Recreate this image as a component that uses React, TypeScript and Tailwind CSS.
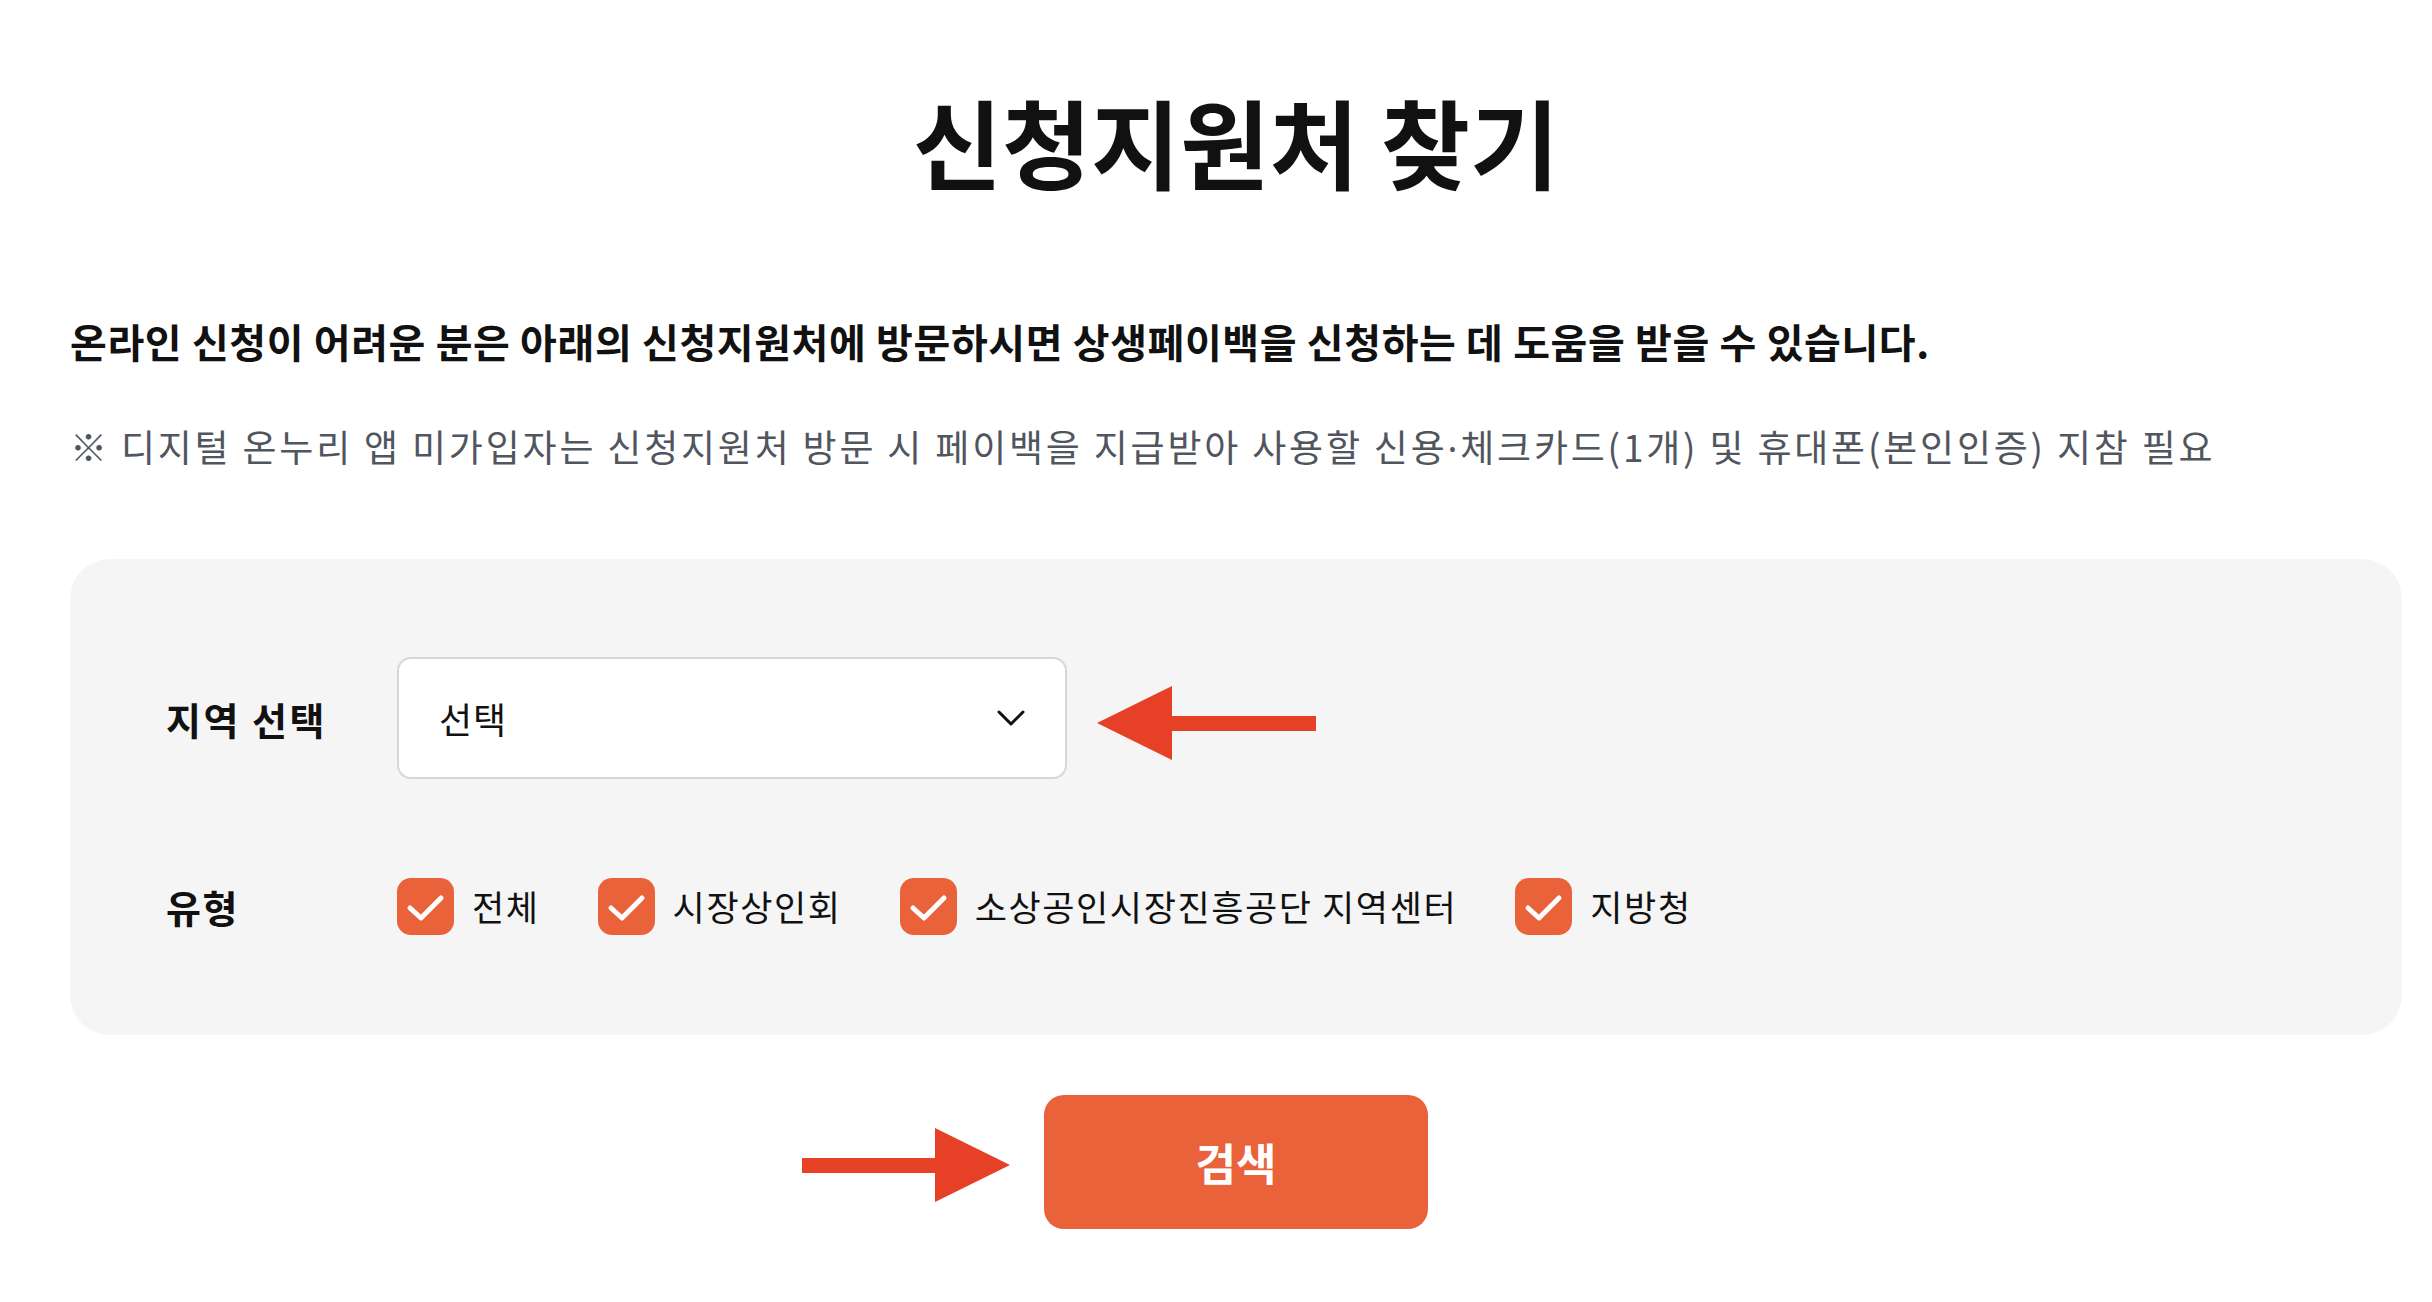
import { useState } from 'react';

const font = { fontFamily: '"Noto Sans CJK KR", "Noto Sans", sans-serif' };

const types = ['전체', '시장상인회', '소상공인시장진흥공단 지역센터', '지방청'];

function CheckBox({ label }: { label: string }) {
  return (
    <label className="flex items-center gap-[18px]">
      <span className="flex h-[57px] w-[57px] items-center justify-center rounded-[14px] bg-[#e9623a]">
        <svg width="57" height="57" viewBox="0 0 57 57" fill="none">
          <polyline points="13,30 24,40 44,20" stroke="white" strokeWidth="5" strokeLinecap="round" strokeLinejoin="round" />
        </svg>
      </span>
      <span className="text-[35px] tracking-[1.6px] text-[#111]">{label}</span>
    </label>
  );
}

export default function App() {
  const [region] = useState('선택');

  return (
    <div className="h-[1302px] w-full bg-white pl-[70px] pr-[30px] text-[#111]" style={font}>
      {/* Title */}
      <h1 className="pt-[91px] text-center text-[97px] font-bold leading-none">신청지원처 찾기</h1>

      {/* Description */}
      <p className="mt-[133px] text-[40px] font-bold leading-none tracking-[0.6px]">
        온라인 신청이 어려운 분은 아래의 신청지원처에 방문하시면 상생페이백을 신청하는 데 도움을 받을 수 있습니다.
      </p>
      <p className="mt-[67px] text-[37px] leading-none tracking-[2.8px] text-[#51565e]">
        ※ 디지털 온누리 앱 미가입자는 신청지원처 방문 시 페이백을 지급받아 사용할 신용
        <span style={{ fontFamily: '"Noto Sans", sans-serif' }}>·</span>
        체크카드(1개) 및 휴대폰(본인인증) 지참 필요
      </p>

      {/* Search panel */}
      <div className="mt-[93px] rounded-[40px] bg-[#f5f5f5] px-[96px] pb-[100px] pt-[98px]">
        <div className="flex items-center">
          <span className="w-[231px] text-[38px] font-bold tracking-[2.5px]">지역 선택</span>
          <div className="flex h-[122px] w-[670px] items-center justify-between rounded-[14px] border-2 border-[#d4d6da] bg-white px-[40px]">
            <span className="text-[36px] tracking-[1px]">{region}</span>
            <svg width="28" height="16" viewBox="0 0 28 16" fill="none">
              <polyline points="2,2 14,14 26,2" stroke="#111" strokeWidth="3" strokeLinecap="round" strokeLinejoin="round" />
            </svg>
          </div>
          <svg className="ml-[30px] mt-[10px]" width="219" height="75" viewBox="0 0 219 75">
            <polygon points="0,37 75,0 75,74" fill="#e64027" />
            <rect x="74" y="30" width="145" height="15" fill="#e64027" />
          </svg>
        </div>

        <div className="mt-[99px] flex items-center">
          <span className="w-[231px] text-[38px] font-bold tracking-[1.5px]">유형</span>
          <div className="flex items-center gap-[58px]">
            {types.map((t) => (
              <CheckBox key={t} label={t} />
            ))}
          </div>
        </div>
      </div>

      {/* Search button */}
      <div className="mt-[60px] flex justify-center">
        <div className="relative">
          <svg className="absolute right-full top-[33px] mr-[34px]" width="208" height="74" viewBox="0 0 208 74">
            <rect x="0" y="30" width="134" height="15" fill="#e64027" />
            <polygon points="133,0 208,37 133,74" fill="#e64027" />
          </svg>
          <button className="flex h-[134px] w-[384px] items-center justify-center rounded-[20px] bg-[#e9623a] text-[44px] font-bold text-white">
            검색
          </button>
        </div>
      </div>
    </div>
  );
}
